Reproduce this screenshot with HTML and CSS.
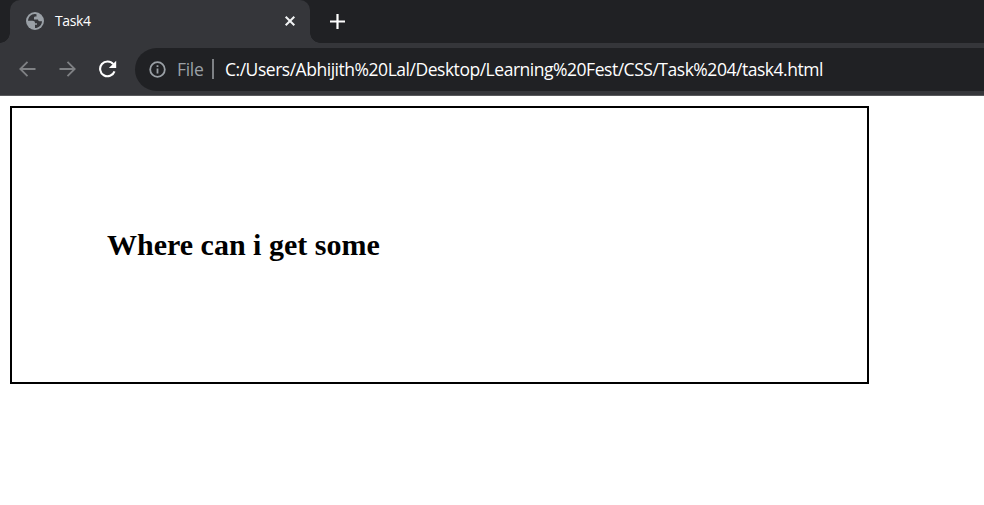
FILE: index.html
```html
<!DOCTYPE html>
<html lang="en">
<head>
<meta charset="utf-8">
<title>Task4</title>
<link rel="stylesheet" href="styles.css">
</head>
<body>
<header class="browser">
  <div class="tabstrip">
    <div class="tab">
      <svg class="globe" width="18" height="18" viewBox="0 0 18 18"><circle cx="9" cy="9" r="9" fill="#9aa0a6"/><path d="M8.8 2C5 2.1 2.2 5 2 8.8H6.3Q9 8.8 9 11.2H11V12.8H9V16C13 16 16 12.9 16 9.2H13.6Q12 9.2 12 7.4H8V5.6Q8 4.4 9.4 4.4H10.5V2.2Z" fill="#35363a"/></svg>
      <span class="tab-title">Task4</span>
      <svg class="close" width="12" height="12" viewBox="0 0 12 12"><path d="M1.7 1.7 10.3 10.3M10.3 1.7 1.7 10.3" stroke="#f1f3f4" stroke-width="2"/></svg>
    </div>
    <svg class="plus" width="15" height="15" viewBox="0 0 15 15"><path d="M7.5 0V15M0 7.5H15" stroke="#fff" stroke-width="2.2"/></svg>
  </div>
  <div class="toolbar">
    <svg class="nav" width="18" height="18" viewBox="0 0 18 18"><path d="M17.5 9H2.5M9.5 1.8 2.3 9 9.5 16.2" /></svg>
    <svg class="nav forward" width="18" height="18" viewBox="0 0 18 18"><path d="M.5 9H15.5M8.5 1.8 15.7 9 8.5 16.2" /></svg>
    <svg class="reload" width="18" height="18" viewBox="0 0 18 18"><path d="M14.3 4.2A7.4 7.4 0 1 0 15.5 11.3" fill="none" stroke="#fff" stroke-width="2.1"/><path d="M17.2 .7V8H9.9Z" fill="#fff"/></svg>
    <div class="omnibox">
      <svg class="info" width="17" height="17" viewBox="0 0 17 17"><circle cx="8.5" cy="8.5" r="7.3" fill="none" stroke="#9aa0a6" stroke-width="1.8"/><path d="M8.5 7.5V12.5M8.5 4.3V6.1" stroke="#9aa0a6" stroke-width="1.8"/></svg>
      <span class="scheme">File</span>
      <span class="divider"></span>
      <span class="url">C:/Users/Abhijith%20Lal/Desktop/Learning%20Fest/CSS/Task%204/task4.html</span>
    </div>
  </div>
</header>
<main class="box">
  <h2>Where can i get some</h2>
</main>
</body>
</html>
```

FILE: styles.css
```css
* { box-sizing: border-box; }
body { margin: 0; background: #fff; overflow: hidden; }
svg { display: block; flex: none; }
.browser { font-family: "Segoe UI", "Open Sans", "Noto Sans", sans-serif; }
.tabstrip {
  display: flex;
  align-items: center;
  height: 43px;
  padding-left: 10px;
  background: #202124;
}
.tab {
  position: relative;
  display: flex;
  align-items: center;
  width: 300px;
  height: 43px;
  padding: 0 14px 1px 16px;
  border-radius: 10px 10px 0 0;
  background: #35363a;
}
.tab::before, .tab::after {
  content: "";
  position: absolute;
  bottom: 0;
  width: 10px;
  height: 10px;
}
.tab::before { left: -10px; background: radial-gradient(circle at 0 0, transparent 9.5px, #35363a 10px); }
.tab::after { right: -10px; background: radial-gradient(circle at 100% 0, transparent 9.5px, #35363a 10px); }
.tab-title { margin-left: 11px; color: #fff; font-size: 14px; line-height: 20px; letter-spacing: -0.35px; }
.close { margin-left: auto; }
.plus { margin: 0 0 1px 20px; }
.toolbar {
  display: flex;
  align-items: center;
  height: 53px;
  padding: 1px 0 0 18px;
  background: #35363a;
  border-bottom: 1px solid #58595c;
}
.nav { margin-bottom: 2px; fill: none; stroke: #7f8184; stroke-width: 1.8; }
.forward { margin-left: 23px; }
.reload { margin: 0 0 2px 22px; }
.omnibox {
  display: flex;
  align-items: center;
  flex: 1;
  height: 43px;
  margin-left: 18px;
  padding-left: 14px;
  border-radius: 22px 0 0 22px;
  background: #202124;
  font-size: 17.5px;
  line-height: 24px;
  white-space: nowrap;
}
.scheme { width: 27px; margin-left: 11px; color: #9aa0a6; letter-spacing: -0.3px; }
.divider { width: 2px; height: 20px; margin: 0 0 2px 8px; background: #7e8185; }
.url { margin-left: 11px; color: #fff; letter-spacing: -0.472px; }
.scheme, .url { padding-bottom: 1px; }
.box {
  display: flex;
  align-items: center;
  width: 859px;
  height: 278px;
  margin: 10px 0 0 10px;
  padding-left: 95px;
  border: 2px solid #000;
}
h2 { margin: 0; font: bold 30px "Liberation Serif", serif; color: #000; }
```
